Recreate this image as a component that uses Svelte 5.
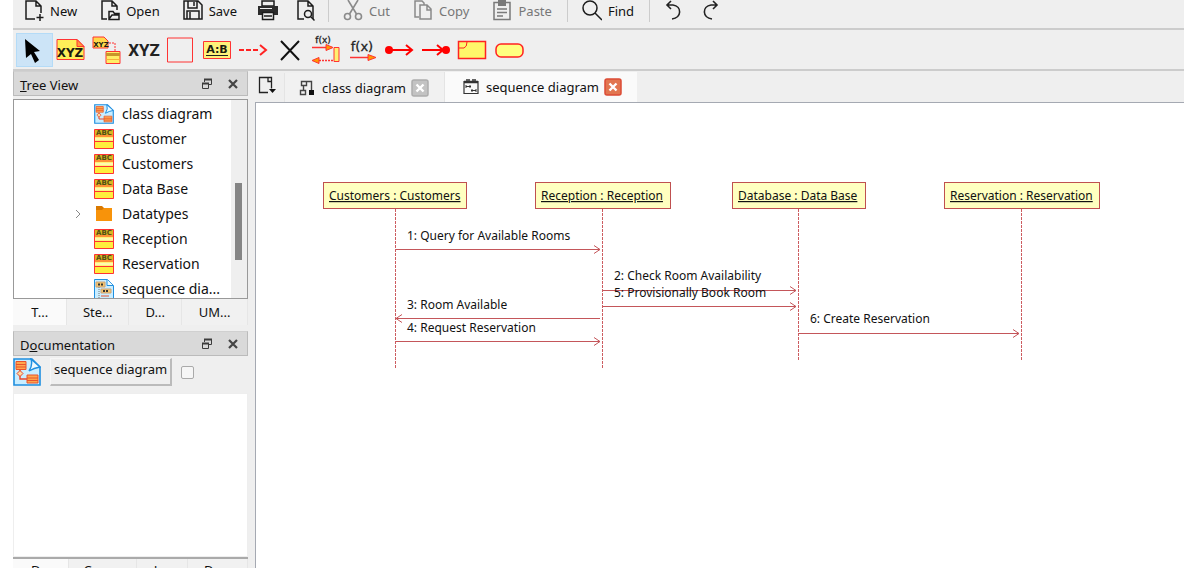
<script lang="ts">
  const entities = [
    { name: 'class diagram', kind: 'classdiagram' },
    { name: 'Customer', kind: 'class' },
    { name: 'Customers', kind: 'class' },
    { name: 'Data Base', kind: 'class' },
    { name: 'Datatypes', kind: 'folder' },
    { name: 'Reception', kind: 'class' },
    { name: 'Reservation', kind: 'class' },
    { name: 'sequence dia...', kind: 'seqdiagram' }
  ];

  const lifelines = [
    { label: 'Customers : Customers', x: 67, width: 144, axis: 139, end: 266 },
    { label: 'Reception : Reception', x: 279, width: 136, axis: 346, end: 266 },
    { label: 'Database : Data Base', x: 476, width: 134, axis: 542, end: 258 },
    { label: 'Reservation : Reservation', x: 688, width: 156, axis: 765, end: 258 }
  ];

  const messages = [
    { label: '1: Query for Available Rooms', from: 140, to: 344, y: 146, tx: 151, ty: 137 },
    { label: '2: Check Room Availability', from: 347, to: 540, y: 187, tx: 358, ty: 177 },
    { label: '5: Provisionally Book Room', from: 347, to: 540, y: 203, tx: 358, ty: 194 },
    { label: '3: Room Available', from: 344, to: 140, y: 215, tx: 151, ty: 206 },
    { label: '4: Request Reservation', from: 140, to: 344, y: 238, tx: 151, ty: 229 },
    { label: '6: Create Reservation', from: 543, to: 763, y: 230, tx: 554, ty: 220 }
  ];

  const tools = [
    'Select', 'Note', 'Anchor', 'Label', 'Box', 'Object', 'Asynchronous message', 'Destroy message',
    'Synchronous message', 'Message', 'Found message', 'Lost message', 'Combined fragment', 'Precondition'
  ];
  let activeTool = $state('Select');
  let showDoc = $state(false);

  const head = (m: { from: number; to: number; y: number }) => {
    const back = m.to > m.from ? m.to - 6 : m.to + 6;
    return `M${back} ${m.y - 4}L${m.to} ${m.y}L${back} ${m.y + 4}`;
  };
</script>

{#snippet dockButtons()}
  <button class="mini" aria-label="Float">
    <svg width="12" height="12" viewBox="0 0 12 12" fill="none" stroke="#3c3c3c"><path d="M3.5 4V1.5h7v5H8" /><path d="M3 1.5h8" stroke-width="2" /><path d="M1.5 5.500h6v5h-6z" /><path d="M1 5.500h7" stroke-width="2" /></svg>
  </button>
  <button class="mini" aria-label="Close">
    <svg width="12" height="12" viewBox="0 0 12 12" stroke="#444" stroke-width="2.2"><path d="M2 2l8 8M10 2l-8 8" /></svg>
  </button>
{/snippet}

{#snippet diagramIcon(size)}
  <svg width={size} height={size} viewBox="0 0 28 28">
    <path d="M1 1h18l8 8v18H1z" fill="#c9edff" stroke="#1f8fe0" stroke-width="1.6" />
    <path d="M18 1q2 6-2 12q5-3 11-4z" fill="#eefaff" stroke="#1f8fe0" stroke-width="1.4" />
    <path d="M7 12v9h8" fill="none" stroke="#e8452c" stroke-width="1.4" />
    <path d="M7 12.500l3 3-3 3-3-3z" fill="#ffd9a0" stroke="#e8452c" />
    <path d="M3 3.500h10v8H3zM14 17h11v8H14z" fill="#ffa64d" stroke="#e8532c" />
    <path d="M3 6.500h10M3 9h10M14 20h11M14 22.500h11" stroke="#e8532c" />
  </svg>
{/snippet}

{#snippet closeMark(active)}
  <svg width="18" height="18" viewBox="0 0 18 18">
    <rect x="1" y="1" width="16" height="16" rx="2" fill={active ? '#e27650' : '#c3c3c3'} stroke={active ? '#dc4b35' : '#adadad'} stroke-width="1.500" />
    <path d="M5.500 5.500l7 7M12.500 5.500l-7 7" stroke="#fff" stroke-width="2.400" />
  </svg>
{/snippet}

<div class="app">
  <header class="mainbar">
    <button class="cmd">
      <svg width="20" height="22" viewBox="0 0 20 22" fill="none" stroke="#1c1c1c" stroke-width="1.500"><path d="M11 19H2V1h10l5 5v7M12 1v5h5" /><path d="M16 14v7M12.500 17.500h7" /></svg>New
    </button>
    <button class="cmd">
      <svg width="20" height="22" viewBox="0 0 20 22" fill="none" stroke="#1c1c1c" stroke-width="1.500"><path d="M7 19H2V1h10l5 5v4M12 1v5h5" /><path d="M9 19.500v-8h4l1.500 2H19v6zM9 19l3-4h7" /></svg>Open
    </button>
    <button class="cmd">
      <svg width="20" height="22" viewBox="0 0 20 22" fill="none" stroke="#1c1c1c" stroke-width="1.500"><path d="M1 1h14l4 4v14H1zM5 1v7h9V1M4 19v-8h12v8M11 2v4M7 12v7" /></svg>Save
    </button>
    <button class="cmd bare" aria-label="Print">
      <svg width="20" height="22" viewBox="0 0 20 22"><path d="M4 1h12v5H4z" fill="none" stroke="#1c1c1c" stroke-width="1.500" /><path d="M0 6h20v9h-4v-3H4v3H0z" fill="#2c2c2c" /><path d="M4.500 12.500h11v7h-11zM6 16h8" fill="none" stroke="#1c1c1c" stroke-width="1.500" /><path d="M2 8.500h12" stroke="#eee" /></svg>
    </button>
    <button class="cmd bare" aria-label="Print preview">
      <svg width="20" height="22" viewBox="0 0 20 22" fill="none" stroke="#1c1c1c" stroke-width="1.500"><path d="M8 19H2V1h10l5 5v13M12 1v5h5" /><circle cx="12" cy="14" r="3.500" /><path d="M14.500 16.500l4 4" /></svg>
    </button>
    <span class="sep"></span>
    <button class="cmd off">
      <svg width="20" height="22" viewBox="0 0 20 22" fill="none" stroke="#8a8a8a" stroke-width="1.600"><circle cx="4.500" cy="16.500" r="3" /><circle cx="15.500" cy="16.500" r="3" /><path d="M5 0l8.500 14M15 0L6.500 14" /></svg>Cut
    </button>
    <button class="cmd off">
      <svg width="20" height="22" viewBox="0 0 20 22" fill="none" stroke="#8a8a8a" stroke-width="1.500"><path d="M6 17H2V1h7l2 2v2" /><path d="M7 5h7l4 4v10H7zM14 5v5h4" /></svg>Copy
    </button>
    <button class="cmd off">
      <svg width="20" height="22" viewBox="0 0 20 22" fill="none" stroke="#7a7a7a" stroke-width="1.500"><path d="M2 2.500h16v17H2zM5 9h10M5 12.500h10M5 16h6" /><path d="M6 0h8v6H6z" fill="#7a7a7a" stroke="none" /></svg>Paste
    </button>
    <span class="sep"></span>
    <button class="cmd">
      <svg width="20" height="22" viewBox="0 0 20 22" fill="none" stroke="#1c1c1c" stroke-width="1.500"><circle cx="8" cy="8" r="7" /><path d="M13 13l7 7" /></svg>Find
    </button>
    <span class="sep"></span>
    <button class="cmd bare" aria-label="Undo">
      <svg width="20" height="22" viewBox="0 0 20 22" fill="none" stroke="#222" stroke-width="1.600"><path d="M9 1L5 5l4 4M5 5h6c9 1 9 13-1 14" /></svg>
    </button>
    <button class="cmd bare" aria-label="Redo">
      <svg width="20" height="22" viewBox="0 0 20 22" fill="none" stroke="#222" stroke-width="1.600"><path d="M13 1l4 4-4 4M17 5h-6c-9 1-9 13 1 14" /></svg>
    </button>
  </header>

  <nav class="toolbar" aria-label="Diagram tools">
    {#each tools as tool, i}
      <button class="tool" class:active={activeTool === tool} aria-label={tool} onclick={() => (activeTool = tool)}>
        <svg width="30" height="28" viewBox="0 0 30 28" fill="none">
          {#if i === 0}
            <path d="M6 3l15 12-6 1 5 8-4 3-4-9-5 4z" fill="#000" />
          {:else if i === 1}
            <path d="M1 3.500h20l7 7v13H1z" fill="#ffee58" stroke="#f33" />
            <path d="M21 3.500v7h7z" fill="#ff9a3c" stroke="#f33" />
            <text x="14" y="21" class="glyph" font-size="12" text-anchor="middle">XYZ</text>
          {:else if i === 2}
            <path d="M1 1h11l4 4v7H1z" fill="#ffd84a" stroke="#f33" />
            <text x="9" y="11" class="glyph" font-size="7" text-anchor="middle">XYZ</text>
            <path d="M17 7h6v8" stroke="#f33" stroke-dasharray="2 1" />
            <path d="M14 15.500h14v12H14z" fill="#ffee66" stroke="#f33" /><path d="M14 18.500h14" stroke="#c9952a" stroke-width="3" /><path d="M14 23.500h14" stroke="#f7b13c" />
          {:else if i === 3}
            <text x="15" y="20" class="wordmark" text-anchor="middle">XYZ</text>
          {:else if i === 4}
            <path d="M2.500 2h25v24h-25z" stroke="#f33" />
          {:else if i === 5}
            <path d="M1.500 5.500h27v17h-27z" fill="#fff27a" stroke="#f33" />
            <text x="15" y="17" class="glyph" font-size="11" text-anchor="middle">A:B</text><path d="M4 19.500h22" stroke="#222" />
          {:else if i === 6}
            <path d="M1 14h20" stroke="#f22" stroke-width="2" stroke-dasharray="5 2" /><path d="M22 9l6 5-6 5" stroke="#f22" stroke-width="2" />
          {:else if i === 7}
            <path d="M6 5l18 19M24 5L6 24" stroke="#111" stroke-width="2" />
          {:else if i === 8}
            <text x="12" y="7" class="fx" font-size="9" text-anchor="middle">f(x)</text>
            <path d="M1 11.500h20" stroke="#f33" stroke-width="1.500" /><path d="M8 24.500h15" stroke="#f33" stroke-width="1.500" stroke-dasharray="2 1" />
            <path d="M15 8.500l7 3-7 3zM8 21.500l-7 3 7 3z" fill="#f90" stroke="#f33" /><path d="M23 11.500h5v14h-5z" fill="#ffef70" stroke="#f33" />
          {:else if i === 9}
            <text x="14" y="15" class="fx" font-size="13" text-anchor="middle">f(x)</text>
            <path d="M2 21.500h18" stroke="#f33" stroke-width="1.500" /><path d="M20 18.500l8 3-8 3z" fill="#f90" stroke="#f33" />
          {:else if i === 10}
            <circle cx="5" cy="14" r="4" fill="#f00" /><path d="M5 14h22M22 9l6 5-6 5" stroke="#f00" stroke-width="2" />
          {:else if i === 11}
            <circle cx="25" cy="14" r="4" fill="#f00" /><path d="M1 14h20M16 9l6 5-6 5" stroke="#f00" stroke-width="2" />
          {:else if i === 12}
            <path d="M1.500 5.500h27v17h-27z" fill="#fff76a" stroke="#f22" stroke-width="1.500" /><path d="M2 12h5q3-1 3-6" stroke="#f22" />
          {:else}
            <rect x="2" y="8" width="27" height="13" rx="5" fill="#ffff80" stroke="#f22" stroke-width="1.500" />
          {/if}
        </svg>
      </button>
    {/each}
  </nav>

  <div class="body">
    <aside>
      <div class="dockhead"><h2><u>T</u>ree View</h2>{@render dockButtons()}</div>
      <div class="tree">
        <ul>
          {#each entities as e}
            <li>
              <span class="chev">
                {#if e.kind === 'folder'}<svg width="8" height="10" viewBox="0 0 8 10" fill="none" stroke="#888"><path d="M2 1l4 4-4 4" /></svg>{/if}
              </span>
              {#if e.kind === 'class'}
                <svg width="20" height="20" viewBox="0 0 20 20">
                  <path d="M.5.5h19v19H.5z" fill="#ffee3c" stroke="#f33" /><path d="M1 1h18v5H1z" fill="#d9b822" />
                  <text x="10" y="6" class="glyph" font-size="7" text-anchor="middle" opacity=".7">ABC</text>
                  <path d="M1 10h18" stroke="#fff9b0" stroke-width="3" /><path d="M0 7h20M0 12.500h20" stroke="#f33" />
                </svg>
              {:else if e.kind === 'folder'}
                <svg width="20" height="20" viewBox="0 0 20 20"><path d="M2 2h6l2 2h8v12H2z" fill="#d97900" /><path d="M2 6h6l2-2h8v13H2z" fill="#f8930a" /></svg>
              {:else if e.kind === 'classdiagram'}
                {@render diagramIcon(20)}
              {:else}
                <svg width="20" height="20" viewBox="0 0 20 20"><path d="M.5.5h13l6 6v13H.5z" fill="#c9edff" stroke="#1f8fe0" /><path d="M13 .5v6h6" fill="#eefaff" stroke="#1f8fe0" /><path d="M2 3h9v5H2zM7 10h10v4H7z" fill="#f6c66a" stroke="#c9a27a" /><path d="M4 5.500h5M9 12h6" stroke="#333" stroke-width="2" stroke-dasharray="2 1" /><path d="M5 8v11" stroke="#777" stroke-dasharray="1 1" /><path d="M7 17h8" stroke="#e8532c" /></svg>
              {/if}
              <span>{e.name}</span>
            </li>
          {/each}
        </ul>
        <div class="track"><span></span></div>
      </div>
      <div class="tabs">
        <button class="current">T...</button><button>Ste...</button><button>D...</button><button>UM...</button>
      </div>
      <div class="dockhead"><h2>D<u>o</u>cumentation</h2>{@render dockButtons()}</div>
      <div class="docrow">
        {@render diagramIcon(28)}
        <button class="docname">sequence diagram</button>
        <input type="checkbox" aria-label="Documentation" bind:checked={showDoc} />
      </div>
      <textarea aria-label="Documentation text"></textarea>
      <div class="tabs lower">
        <button class="current">D...</button><button>Com...</button><button>L...</button><button>De...</button>
      </div>
    </aside>

    <main>
      <div class="doctabs">
        <button class="newtab" aria-label="New diagram">
          <svg width="20" height="20" viewBox="0 0 20 20" fill="none" stroke="#222" stroke-width="1.300"><path d="M11 16.500H2.500v-15h12v11M11 1.500v4h4" /><path d="M12 13h7l-3.500 4z" fill="#111" stroke="none" /></svg>
        </button>
        <div class="doctab">
          <svg width="16" height="16" viewBox="0 0 16 16" fill="none" stroke="#444"><path d="M2.500 1.500h5v4h-5zM1.500 10.500h5v4h-5zM4.500 6v4M8 1.500h4.500V10" stroke-width="1.400" /><path d="M10 10h5v5h-5z" fill="#111" stroke="none" /></svg>
          <span>class diagram</span>
          <button class="mini" aria-label="Close class diagram">{@render closeMark(false)}</button>
        </div>
        <div class="doctab open">
          <svg width="16" height="16" viewBox="0 0 16 16" fill="none" stroke="#333"><path d="M1 2.500h14v12H1z" stroke-width="1.200" /><path d="M1 3h14" stroke-width="2.500" /><path d="M3 1h4M9 1h4" stroke-width="1.500" /><path d="M3 7.500h5M8 11.500h5M3 6v3M7 6v3M9 10v3M13 10v3" /></svg>
          <span>sequence diagram</span>
          <button class="mini" aria-label="Close sequence diagram">{@render closeMark(true)}</button>
        </div>
      </div>
      <div class="canvas">
        <svg width="100%" height="100%">
          {#each lifelines as l}
            <line x1={l.axis + 0.5} x2={l.axis + 0.5} y1="106" y2={l.end} class="life" />
            <rect x={l.x + 0.5} y="79.500" width={l.width - 1} height="26" class="head" />
            <text x={l.x + 6} y="97" class="under">{l.label}</text>
          {/each}
          {#each messages as m}
            <path d="M{m.from} {m.y + 0.5}H{m.to}" class="msg" />
            <path d={head(m)} transform="translate(0 .5)" class="msg" />
            <text x={m.tx} y={m.ty}>{m.label}</text>
          {/each}
        </svg>
      </div>
    </main>
  </div>
</div>

<style>
  :global(body) { margin: 0; background: #fff; }
  .app {
    box-sizing: border-box;
    height: 100vh;
    padding-left: 13px;
    display: flex;
    flex-direction: column;
    overflow: hidden;
    font: 13px/20px "Noto Sans", sans-serif;
    color: #111;
  }
  button { font: inherit; color: inherit; background: none; border: 0; padding: 0; margin: 0; }
  .mainbar {
    display: flex;
    align-items: center;
    height: 22px;
    padding-bottom: 6px;
    background: #efefef;
    border-bottom: 2px solid #ccc;
  }
  .cmd { display: flex; align-items: center; gap: 6px; padding: 0 12px 0 11px; height: 22px; }
  .cmd.bare { padding: 0 9px; }
  .off { color: #777; }
  .sep { align-self: stretch; width: 1px; margin: 0 3px; background: #ccc; }
  .toolbar {
    display: grid;
    grid-template-columns: repeat(14, 1fr);
    box-sizing: border-box;
    width: 100%;
    height: 41px;
    padding: 3px calc(100% - 514px) 2px 3px;
    background: #efefef;
    border-bottom: 2px solid #ccc;
  }
  .tool { display: flex; align-items: center; justify-content: center; border: 1px solid transparent; }
  .tool.active { background: #cce4f7; border-color: #b4dbf7; }
  .tool svg { overflow: visible; }
  .glyph { font-family: "DejaVu Sans", sans-serif; font-weight: 700; fill: #1c1c10; }
  .wordmark { font: 700 17px Roboto, sans-serif; fill: #222; }
  .fx { font-family: "DejaVu Sans", sans-serif; fill: #222; stroke: #222; stroke-width: .3px; }
  .body { flex: 1; min-height: 0; display: flex; background: #efefef; }
  aside { width: 235px; flex: none; display: flex; flex-direction: column; }
  .dockhead {
    box-sizing: border-box;
    flex: none;
    display: flex;
    align-items: center;
    gap: 14px;
    height: 25px;
    padding: 0 8px 0 6px;
    background: #d9d9d9;
    border: 1px solid #bbb;
    border-top-color: #d0d0d0;
  }
  h2 { flex: 1; margin: 0; padding-top: 3px; font-size: 13px; font-weight: 400; }
  .mini { display: flex; }
  .tree {
    box-sizing: border-box;
    flex: none;
    height: 200px;
    margin-top: 3px;
    display: flex;
    overflow: hidden;
    background: #fff;
    border: 1px solid #999;
  }
  ul { flex: 1; margin: 0; padding: 1px 0 0; list-style: none; font-size: 14px; line-height: 25px; }
  li { display: flex; align-items: center; height: 25px; padding-left: 60px; white-space: nowrap; }
  li > svg { margin-right: 8px; }
  .chev { width: 20px; display: flex; }
  .track { width: 16px; background: #efefef; padding-top: 83px; }
  .track span { display: block; width: 7px; height: 77px; margin-left: 4px; background: #858585; }
  .tabs { flex: none; display: grid; grid-template-columns: 54fr 61fr 53fr 65fr; height: 26px; margin-bottom: 6px; }
  .tabs button { background: #f1f1f1; border-right: 1px solid #e6e6e6; }
  .tabs .current { background: #fafafa; }
  .docrow { flex: none; display: flex; align-items: center; height: 32px; margin-bottom: 5px; gap: 9px; }
  .docname {
    height: 28px;
    padding: 0 3px 6px;
    border: 1px solid #f7f7f7;
    border-right: 2px solid #bbb;
    border-bottom: 2px solid #bbb;
    line-height: 18px;
  }
  input {
    appearance: none;
    width: 13px;
    height: 13px;
    margin: 0;
    background: #f6f6f6;
    border: 1px solid #aaa;
    border-radius: 2px;
  }
  textarea { flex: 1; min-height: 0; resize: none; padding: 4px; border: 1px solid #eee; background: #fff; outline: 0; }
  .lower { height: 22px; margin-bottom: -13px; grid-template-columns: 56fr 67fr 51fr 59fr; border-top: 2px solid #aaa; }
  main { flex: 1; min-width: 0; margin-left: 7px; display: flex; flex-direction: column; }
  .doctabs { display: flex; align-items: flex-end; height: 31px; }
  .newtab { display: flex; padding: 0 7px 6px 2px; }
  .doctab { display: flex; align-items: center; gap: 7px; height: 29px; padding: 0 15px 0 14px; background: #f1f1f1; border-left: 1px solid #e4e4e4; }
  .doctab span { white-space: nowrap; }
  .doctab .mini { margin-left: -2px; }
  .doctab.open { height: 30px; padding-left: 18px; background: #fafafa; }
  .canvas { flex: 1; min-height: 0; background: #fff; border-top: 1px solid #a5a9b2; border-left: 1px solid #a5a9b2; }
  .canvas svg { display: block; }
  .canvas text { font: 12px "Noto Sans", sans-serif; fill: #111; }
  .canvas .under { text-decoration: underline; }
  .life { stroke: #cc5c60; stroke-dasharray: 3 1; }
  .head { fill: #ffffc0; stroke: #bf5050; }
  .msg { fill: none; stroke: #c4565a; }
</style>
